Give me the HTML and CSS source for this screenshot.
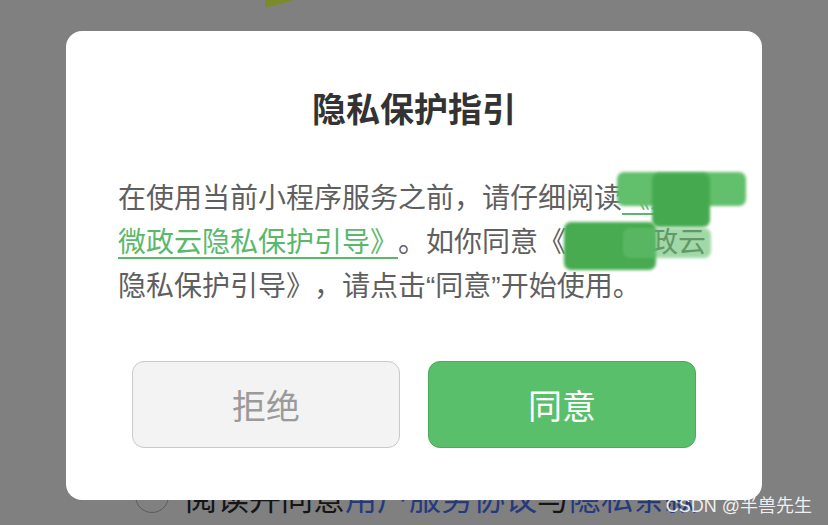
FILE: index.html
```html
<!DOCTYPE html>
<html lang="zh-CN">
<head>
<meta charset="utf-8">
<title>隐私保护指引</title>
<link rel="stylesheet" href="styles.css">
</head>
<body>
<div class="screen">
  <svg class="leaf" width="30" height="8" viewBox="0 0 30 8"><path d="M0 0 H28 Q18 4 2 7 Q0 7 0 5 Z" fill="#7b8a2a"/></svg>
  <div class="agree">
    <span class="radio"></span>
    <span class="agree-text">阅读并同意<span class="blue">用户服务协议</span>与<span class="blue">隐私条款</span></span>
  </div>
</div>

<div class="dialog">
  <h1 class="title">隐私保护指引</h1>
  <p class="msg">在使用当前小程序服务之前，请仔细阅读<a class="link">《某某微政云隐私保护引导》</a>。如你同意《某某微政云隐私保护引导》，请点击“同意”开始使用。
    <span class="blob blob-a1"></span>
    <span class="blob blob-a2"></span>
    <span class="blob blob-b1"></span>
    <span class="blob blob-b2"></span>
  </p>
  <div class="actions">
    <button class="btn btn-reject">拒绝</button>
    <button class="btn btn-agree">同意</button>
  </div>
</div>

<div class="watermark">CSDN @半兽先生</div>
</body>
</html>
```

FILE: styles.css
```css
html, body {
  margin: 0;
  padding: 0;
}
body {
  width: 828px;
  height: 525px;
  overflow: hidden;
  background: #808080;
  position: relative;
  font-family: "Noto Sans CJK SC", sans-serif;
}
.screen {
  height: 525px;
  display: flex;
  flex-direction: column;
  justify-content: space-between;
  box-sizing: border-box;
  padding-bottom: 9px;
}
.leaf {
  display: block;
  margin-left: 265px;
}
.agree {
  display: flex;
  align-items: center;
  height: 40px;
  padding-left: 135px;
  gap: 16px;
}
.radio {
  width: 34px;
  height: 34px;
  border: 1.5px solid #5c5c5c;
  border-radius: 50%;
  box-sizing: border-box;
}
.agree-text {
  font-size: 32px;
  line-height: 40px;
  color: #151515;
}
.blue {
  color: #25397c;
}

.dialog {
  position: absolute;
  left: 66px;
  top: 31px;
  width: 696px;
  box-sizing: border-box;
  background: #fff;
  border-radius: 16px;
  padding: 53px 0 52px;
  display: flex;
  flex-direction: column;
}
.title {
  margin: 0;
  font-size: 34px;
  line-height: 48px;
  font-weight: 700;
  color: #333;
  text-align: center;
  letter-spacing: 0;
}
.msg {
  position: relative;
  margin: 45px 52px 0;
  font-family: "Liberation Sans", "Noto Sans CJK SC", sans-serif;
  font-size: 28px;
  line-height: 44px;
  color: #5f5f5f;
  text-spacing-trim: space-all;
}
.link {
  color: #5bb86b;
  text-decoration: underline;
  text-decoration-thickness: 1.5px;
  text-underline-offset: 5px;
}
.blob {
  position: absolute;
  display: block;
  filter: blur(1.5px);
  border-radius: 7px;
}
.blob-a1 {
  left: 499px;
  top: -5px;
  width: 129px;
  height: 34px;
  background: #62bf6c;
}
.blob-a2 {
  left: 534px;
  top: -4px;
  width: 58px;
  height: 54px;
  background: #45aa4f;
}
.blob-b1 {
  left: 446px;
  top: 45px;
  width: 92px;
  height: 48px;
  background: #48ab50;
}
.blob-b2 {
  left: 505px;
  top: 51px;
  width: 88px;
  height: 30px;
  background: rgba(100, 190, 110, 0.6);
}
.actions {
  display: flex;
  gap: 28px;
  margin: 52px 66px 0;
}
.btn {
  flex: 1;
  height: 87px;
  border-radius: 12px;
  font-family: "Noto Sans CJK SC", sans-serif;
  font-size: 34px;
  box-sizing: border-box;
  padding: 0;
}
.btn-reject {
  background: #f3f3f3;
  border: 1px solid #c9c9c9;
  color: #9a9a9a;
}
.btn-agree {
  background: #5abf6b;
  border: 1px solid #4ea95d;
  color: #fff;
}
.watermark {
  position: absolute;
  right: 16px;
  bottom: 8px;
  font-family: "Liberation Sans", "Noto Sans CJK SC", sans-serif;
  font-size: 18px;
  line-height: 22px;
  color: rgba(255, 255, 255, 0.88);
}
```
